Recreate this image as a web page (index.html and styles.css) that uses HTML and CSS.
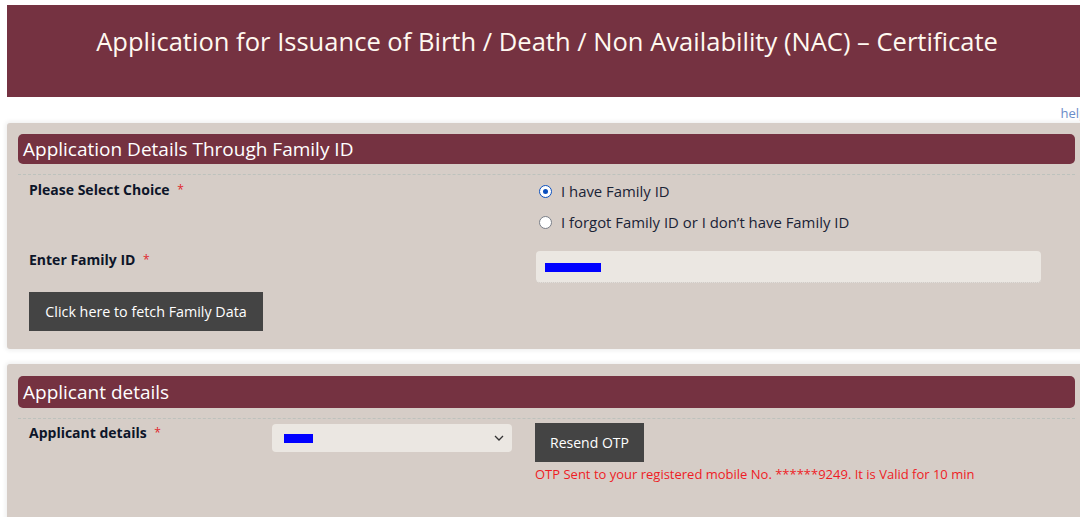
FILE: index.html
```html
<!DOCTYPE html>
<html>
<head>
<meta charset="utf-8">
<link rel="stylesheet" href="styles.css">
</head>
<body>
<div class="page">
  <header class="banner">
    <h1 class="banner-title">Application for Issuance of Birth / Death / Non Availability (NAC) – Certificate</h1>
  </header>
  <div class="help-row"><a class="help-link" href="#">help</a></div>

  <section class="panel panel-family">
    <h2 class="section-head">Application Details Through Family ID</h2>
    <div class="section-body">
      <div class="form-row row-choice">
        <div class="label">Please Select Choice <span class="req">*</span></div>
        <div class="field radios">
          <label class="radio"><span class="radio-dot checked"></span>I have Family ID</label>
          <label class="radio"><span class="radio-dot"></span>I forgot Family ID or I don’t have Family ID</label>
        </div>
      </div>
      <div class="form-row row-id">
        <div class="label">Enter Family ID <span class="req">*</span></div>
        <div class="field">
          <div class="text-input"><span class="redact redact-id"></span></div>
        </div>
      </div>
      <button class="btn btn-fetch">Click here to fetch Family Data</button>
    </div>
  </section>

  <section class="panel panel-applicant">
    <h2 class="section-head">Applicant details</h2>
    <div class="section-body">
      <div class="applicant-row">
        <div class="label label-applicant">Applicant details <span class="req">*</span></div>
        <div class="select-box">
          <span class="redact redact-name"></span>
          <svg class="chev" width="10" height="6" viewBox="0 0 10 6"><path d="M1 1 L5 5 L9 1" fill="none" stroke="#333" stroke-width="1.3"/></svg>
        </div>
        <div class="otp-col">
          <button class="btn btn-otp">Resend OTP</button>
          <div class="otp-msg">OTP Sent to your registered mobile No. ******9249. It is Valid for 10 min</div>
        </div>
      </div>
    </div>
  </section>
</div>
</body>
</html>
```

FILE: styles.css
```css
* { box-sizing: border-box; }
html, body { margin: 0; padding: 0; background: #fff; overflow: hidden; }
body { font-family: "Open Sans", "DejaVu Sans", sans-serif; color: #111; }

.page {
  width: 1087px;
  padding: 5px 0 0 7px;
}

.banner {
  height: 92px;
  background: #753241;
  display: flex;
  justify-content: center;
  padding-top: 19px;
}
.banner-title {
  margin: 0;
  font-weight: normal;
  font-size: 25.55px;
  line-height: 34px;
  color: #fff9f0;
}

.help-row {
  height: 26px;
  text-align: right;
  padding-top: 4px;
}
.help-link {
  font-size: 13px;
  color: #6a8cc8;
  text-decoration: none;
  line-height: 17px;
}

.panel {
  background: #d6cdc7;
  border-radius: 3px;
  box-shadow: 0 0 4px 2px rgba(0,0,0,0.06);
  padding: 11px 12px 18px 11px;
}
.panel-applicant { margin-top: 15px; height: 170px; padding-top: 12px; }

.section-head {
  margin: 0;
  height: 30px;
  background: #753241;
  border-radius: 5px;
  color: #fff;
  font-weight: normal;
  font-size: 19px;
  line-height: 30px;
  padding-left: 5px;
}
.panel-applicant .section-head { height: 32px; line-height: 32px; }

.section-body {
  margin-top: 10px;
  border-top: 1px dashed #bdc2bd;
  padding: 0 11px;
}

.form-row { display: flex; }
.label {
  font-weight: bold;
  font-size: 14px;
  color: #0d1529;
}
.req { color: #e0262d; font-weight: normal; font-size: 12px; vertical-align: top; margin-left: 4px; }

.row-choice { padding-top: 6px; height: 76px; }
.row-choice .label { width: 507px; line-height: 18px; }
.radios { display: flex; flex-direction: column; gap: 12px; padding-top: 1px; }
.radio {
  display: flex;
  align-items: center;
  font-size: 14.9px;
  line-height: 19px;
  color: #1a2336;
}
.radio-dot {
  width: 13px;
  height: 13px;
  border-radius: 50%;
  border: 1px solid #7a7f88;
  background: #fff;
  margin: 0 9px 0 3px;
  position: relative;
}
.radio-dot.checked { border: 1.5px solid #0b4fbe; }
.radio-dot.checked::after {
  content: "";
  position: absolute;
  left: 2.5px; top: 2.5px;
  width: 5px; height: 5px;
  border-radius: 50%;
  background: #0b4fbe;
}

.row-id { height: 41px; }
.row-id .label { width: 507px; padding-top: 0; line-height: 18px; }
.text-input {
  width: 505px;
  height: 32px;
  background: #ebe7e2;
  border-radius: 4px;
  border-bottom: 1px dotted #c9c4bf;
  padding: 12px 0 0 9px;
}
.redact { display: block; background: #0000ff; }
.redact-id { width: 56px; height: 9px; }

.btn {
  background: #444444;
  color: #fff;
  border: none;
  font-family: "Open Sans", "DejaVu Sans", sans-serif;
  font-size: 14.3px;
  padding: 0;
  cursor: pointer;
}
.btn-fetch { width: 234px; height: 39px; }

.applicant-row { display: flex; padding-top: 4px; }
.label-applicant { width: 243px; padding-top: 0; line-height: 20px; }
.select-box {
  width: 240px;
  height: 28px;
  background: #ebe7e2;
  border-radius: 4px;
  display: flex;
  align-items: center;
  justify-content: space-between;
  padding: 0 8px 0 12px;
  margin-top: 1px;
}
.redact-name { width: 29px; height: 9px; }
.otp-col { margin-left: 23px; }
.btn-otp { width: 109px; height: 39px; font-size: 14px; }
.otp-msg {
  margin-top: 3px;
  font-size: 13px;
  color: #ee1c25;
  line-height: 18px;
}
```
